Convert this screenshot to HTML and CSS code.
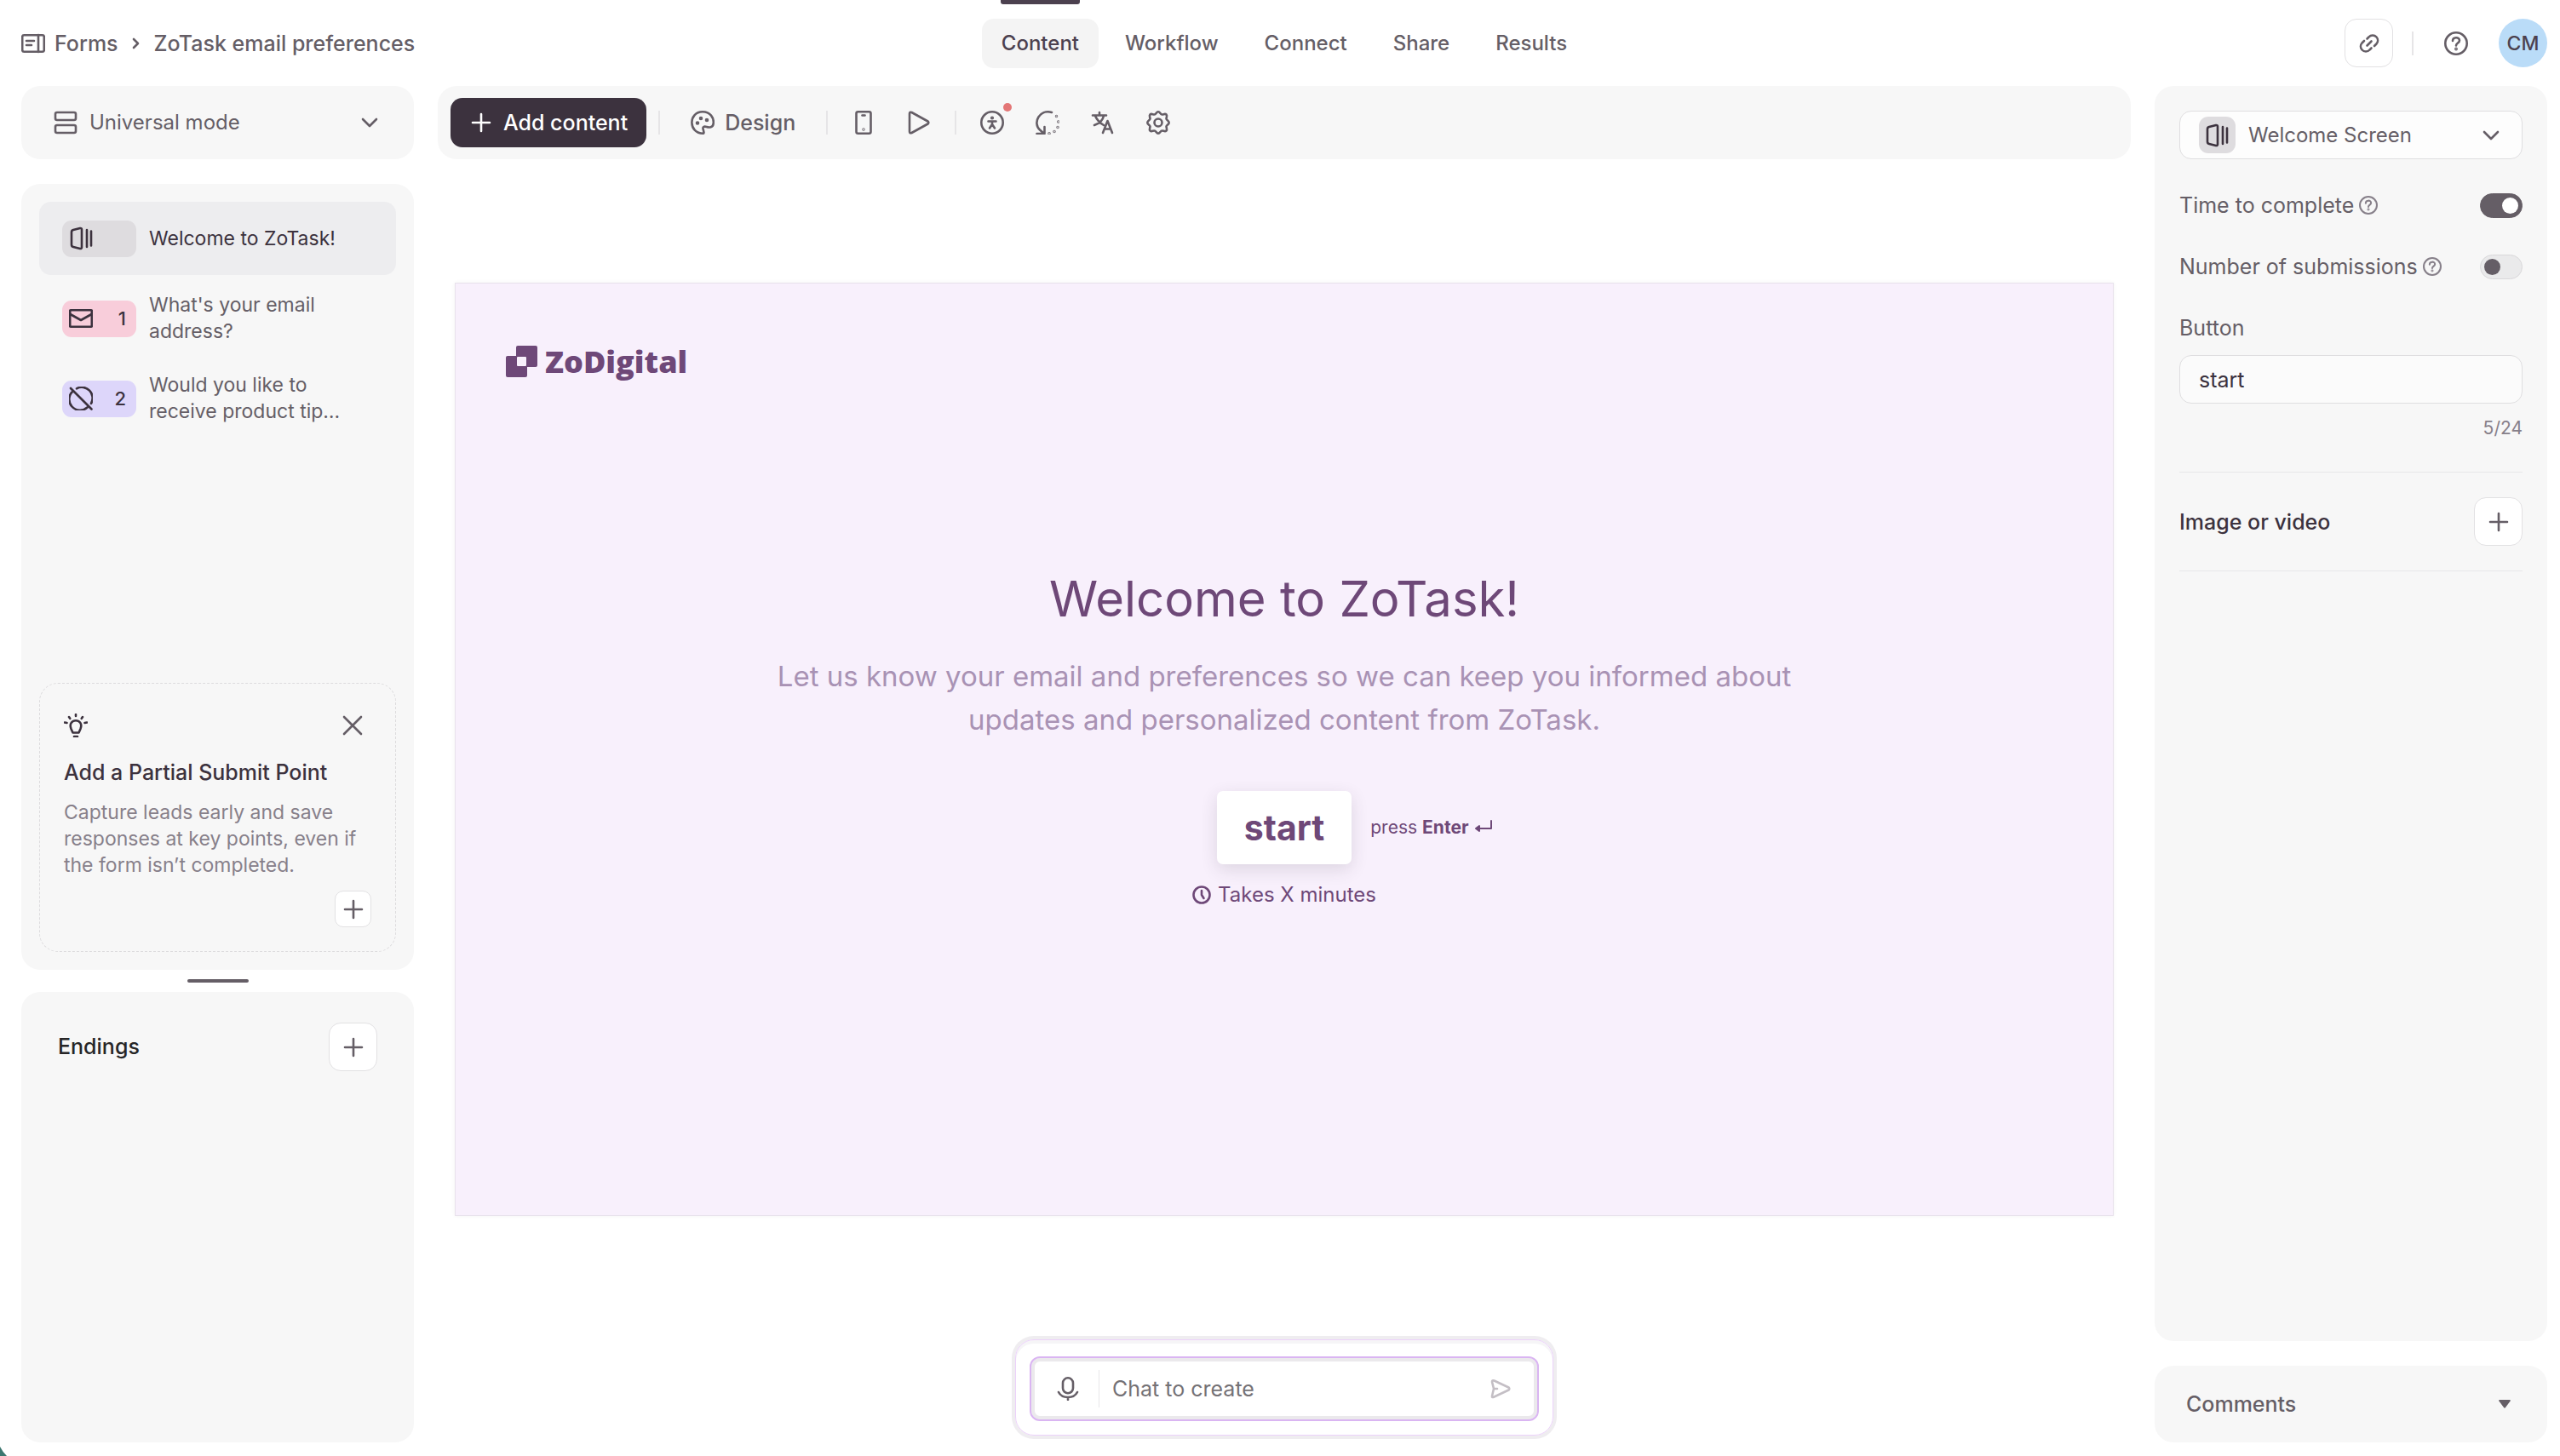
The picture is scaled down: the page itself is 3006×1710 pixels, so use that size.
FILE: index.html
```html
<!DOCTYPE html>
<html lang="en">
<head>
  <meta charset="UTF-8" />
  <meta name="viewport" content="width=device-width, initial-scale=1.0"/>
  <title>ZoTask email preferences</title>
  <link rel="stylesheet" href="styles.css">
</head>
<body>
  <header class="topbar">
    <nav class="breadcrumb" aria-label="Breadcrumb">
      <a href="#">
        <svg class="icon" viewBox="0 0 28 28"><rect x="1.200" y="4.200" width="25.600" height="19.600" rx="2"/><path d="M20 4v20M6 11h9M6 16h6"/></svg>
        Forms
      </a>
      <svg class="crumb-sep" viewBox="0 0 10 14"><path d="M2 2l5 5-5 5"/></svg>
      <a href="#">ZoTask email preferences</a>
    </nav>
    <nav class="tabs" aria-label="Form">
      <a class="tab active" href="#">Content</a>
      <a class="tab" href="#">Workflow</a>
      <a class="tab" href="#">Connect</a>
      <a class="tab" href="#">Share</a>
      <a class="tab" href="#">Results</a>
    </nav>
    <div class="account">
      <button class="square-btn" aria-label="Copy link">
        <svg class="icon" viewBox="0 0 28 28"><path d="M11.500 8.500l2-2a6 6 0 0 1 9 0 6 6 0 0 1 0 8l-2.500 2.500M8 11l-2.500 2.500a6 6 0 0 0 0 8 6 6 0 0 0 9 0l2-2M11.500 16.500l5-5"/></svg>
      </button>
      <span class="divider"></span>
      <button class="icon-btn" aria-label="Help">
        <svg class="icon" viewBox="0 0 28 28"><circle cx="14" cy="14" r="12.700"/><path d="M10 11c0-5 8-5 8-.5 0 3-4 3-4 6"/><circle class="fill" cx="14" cy="20.500" r=".6"/></svg>
      </button>
      <button class="avatar">CM</button>
    </div>
  </header>

  <main class="layout">
    <aside class="sidebar">
      <label class="panel mode">
        <svg class="icon" viewBox="0 0 28 28"><rect x="2" y="2" width="24" height="9" rx="2"/><rect x="2" y="17" width="24" height="9" rx="2"/></svg>
        <select aria-label="Mode">
          <option>Universal mode</option>
        </select>
        <svg class="chevron" viewBox="0 0 20 14"><path d="M2 3l8 8 8-8"/></svg>
      </label>

      <section class="panel steps">
        <div class="step-list">
          <button class="step selected">
            <span class="badge">
              <svg class="icon" viewBox="0 0 28 28"><path d="M5 4l8-2q2-.3 2 1.500v21q0 1.800-2 1.500l-8-2q-2-.5-2-2.500V6.500Q3 4.500 5 4zM21 4v20M26 5.500v17"/></svg>
            </span>
            <span class="step-text">Welcome to ZoTask!</span>
          </button>
          <button class="step">
            <span class="badge pink">
              <svg class="icon" viewBox="0 0 28 28"><rect x="1.200" y="4.200" width="25.600" height="19.600" rx="1"/><path d="M1.500 9L14 16l12.500-7"/></svg>
              1
            </span>
            <span class="step-text">What's your email address?</span>
          </button>
          <button class="step">
            <span class="badge purple">
              <svg class="icon" viewBox="0 0 28 28"><path d="M2 2l24.500 24.500M9 2.300a12.700 12.700 0 0 1 17 17.500M4.500 5.500a12.700 12.700 0 0 0 17 19"/></svg>
              2
            </span>
            <span class="step-text">Would you like to receive product tip…</span>
          </button>
        </div>

        <div class="tip">
          <div class="tip-head">
            <svg class="icon" viewBox="0 0 28 28"><path d="M10.500 22.500l-2-4.500c-5-13 16-13 11 0l-2 4.500zM12 27h4M14 1v2M6 4l1.200 1.800M22 4l-1.200 1.800M1 10.500l2.500.5M27 10.500l-2.500.5"/></svg>
            <button class="icon-btn" aria-label="Dismiss">
              <svg class="icon" viewBox="0 0 28 28"><path d="M4 4l20 20M24 4L4 24"/></svg>
            </button>
          </div>
          <h2>Add a Partial Submit Point</h2>
          <p>Capture leads early and save responses at key points, even if the form isn’t completed.</p>
          <button class="square-btn small" aria-label="Add partial submit point">
            <svg class="icon" viewBox="0 0 28 28"><path d="M14 4v20M4 14h20"/></svg>
          </button>
        </div>
      </section>

      <div class="handle"></div>

      <section class="panel endings">
        <h2>Endings</h2>
        <button class="square-btn" aria-label="Add ending">
          <svg class="icon" viewBox="0 0 28 28"><path d="M14 4v20M4 14h20"/></svg>
        </button>
      </section>
    </aside>

    <section class="editor">
      <div class="panel toolbar">
        <button class="add-btn">
          <svg class="icon" viewBox="0 0 28 28"><path d="M14 4v20M4 14h20"/></svg>
          Add content
        </button>
        <span class="divider"></span>
        <button class="design-btn">
          <svg class="icon" viewBox="0 0 28 28"><path d="M15 26.700C-3 27-3 1.300 14 1.300c9 0 13.500 7 12.700 13.700-.5 5-5 5-8 4-3-1-5 0-4 3 .5 2 1.300 4.500.3 4.700z"/><circle class="fill" cx="8" cy="14.500" r="1"/><circle class="fill" cx="12" cy="9" r="1"/><circle class="fill" cx="19" cy="11" r="1"/></svg>
          Design
        </button>
        <span class="divider"></span>
        <div class="tool-group">
          <button class="icon-btn" aria-label="Mobile preview">
            <svg class="icon" viewBox="0 0 28 28"><rect x="5.500" y="1.300" width="17" height="25.400" rx="2"/><path d="M12.500 5.500h3"/><circle class="fill" cx="14" cy="22" r=".4"/></svg>
          </button>
          <button class="icon-btn" aria-label="Play preview">
            <svg class="icon" viewBox="0 0 28 28"><path d="M3 3.500q0-2.500 2.500-1.500l19 10.500q1.500 1.500 0 3l-19 10.500Q3 27 3 24.500z"/></svg>
          </button>
        </div>
        <span class="divider"></span>
        <div class="tool-group">
          <button class="icon-btn" aria-label="Accessibility">
            <svg class="icon" viewBox="0 0 28 28"><circle cx="14" cy="14" r="12.700"/><circle class="fill" cx="14" cy="8.500" r=".8"/><path d="M9.500 12.500h9M14 12.500v4M14 16l-3 4.500M14 16l3 4.500"/></svg>
            <span class="dot"></span>
          </button>
          <button class="icon-btn" aria-label="Branching">
            <svg class="icon" viewBox="0 0 28 28"><path d="M19 2C5-2-4 14 5 22.500l4.500 4M10.500 19v8H1.500"/><circle class="fill" cx="24.500" cy="6.500" r=".4"/><circle class="fill" cx="26.700" cy="13" r=".4"/><circle class="fill" cx="26" cy="19.500" r=".4"/><circle class="fill" cx="22" cy="24.500" r=".4"/><circle class="fill" cx="16" cy="26.700" r=".4"/></svg>
          </button>
          <button class="icon-btn" aria-label="Translate">
            <svg class="icon" viewBox="0 0 28 28"><path d="M2 5.500h16M10 2v3.500M5 6c2 5 5 8 10 11M15 6c-1 5-5 9-11 11M14 26l5.500-14L25 26M16 21.500h7"/></svg>
          </button>
          <button class="icon-btn" aria-label="Settings">
            <svg class="icon" viewBox="0 0 28 28"><path d="M14 1.300c2.300 0 2.500 3.200 4.500 3.200S22 3 23.500 4.500 23.500 8 23.500 9.500s3.200 2.200 3.200 4.500-3.200 3-3.200 4.500 1.500 3.500 0 5-3 0-5 0-2.200 3.200-4.500 3.200-2.500-3.200-4.500-3.200-3.500 1.500-5 0 0-3.500 0-5-3.200-2.200-3.200-4.500 3.200-3 3.200-4.500-1.500-3.500 0-5 3 0 5 0 2.200-3.200 4.500-3.200z"/><circle cx="14" cy="14" r="4.500"/></svg>
          </button>
        </div>
      </div>

      <div class="stage">
        <article class="canvas">
          <div class="brand">
            <svg class="brand-mark" viewBox="0 0 37 37"><rect x="12" y="0" width="25" height="25" rx="2"/><rect x="0" y="12" width="25" height="25" rx="2"/><rect class="hole" x="13" y="13" width="11" height="11" rx="1"/></svg>
            <span>ZoDigital</span>
          </div>
          <div class="welcome">
            <h1>Welcome to ZoTask!</h1>
            <p>Let us know your email and preferences so we can keep you informed about updates and personalized content from ZoTask.</p>
            <div class="start-row">
              <button class="start-btn">start</button>
              <span class="hint">press <strong>Enter</strong>
                <svg class="enter" viewBox="0 0 20 18"><path d="M19 1v9H4"/><path class="fill" d="M5 7v6l-4-3z"/></svg>
              </span>
            </div>
            <div class="duration">
              <svg class="clock" viewBox="0 0 22 22"><circle cx="11" cy="11" r="9.500"/><path d="M11 6v5l2.500 4"/></svg>
              Takes X minutes
            </div>
          </div>
        </article>
      </div>

      <form class="chat">
        <div class="chat-box">
          <button class="icon-btn" type="button" aria-label="Dictate">
            <svg class="icon" viewBox="0 0 28 28"><rect x="8" y="1.300" width="12" height="18" rx="6"/><path d="M3 18c4 8 18 8 22 0M14 24v3"/></svg>
          </button>
          <input type="text" placeholder="Chat to create" aria-label="Chat to create">
          <button class="icon-btn send" type="button" aria-label="Send">
            <svg class="icon" viewBox="0 0 28 28"><path d="M4 6q0-2.500 2.500-1.500l17 8q1.500 1.500 0 3l-17 8Q3.500 25 4 22.500L6 14zM6 14h4"/></svg>
          </button>
        </div>
      </form>
    </section>

    <aside class="sidebar">
      <section class="panel settings">
        <label class="field type-select">
          <span class="badge square">
            <svg class="icon" viewBox="0 0 28 28"><path d="M5 4l8-2q2-.3 2 1.500v21q0 1.800-2 1.500l-8-2q-2-.5-2-2.500V6.500Q3 4.500 5 4zM21 4v20M26 5.500v17"/></svg>
          </span>
          <select aria-label="Screen type">
            <option>Welcome Screen</option>
          </select>
          <svg class="chevron" viewBox="0 0 20 14"><path d="M2 3l8 8 8-8"/></svg>
        </label>

        <div class="setting">
          <label for="time">Time to complete</label>
          <svg class="help" viewBox="0 0 28 28"><circle cx="14" cy="14" r="12.700"/><path d="M10 11c0-5 8-5 8-.5 0 3-4 3-4 6"/><circle class="fill" cx="14" cy="20.500" r=".6"/></svg>
          <input class="toggle" type="checkbox" id="time" checked>
        </div>
        <div class="setting">
          <label for="submissions">Number of submissions</label>
          <svg class="help" viewBox="0 0 28 28"><circle cx="14" cy="14" r="12.700"/><path d="M10 11c0-5 8-5 8-.5 0 3-4 3-4 6"/><circle class="fill" cx="14" cy="20.500" r=".6"/></svg>
          <input class="toggle" type="checkbox" id="submissions">
        </div>

        <label class="field-label" for="button-text">Button</label>
        <input class="field" type="text" id="button-text" value="start" maxlength="24">
        <div class="counter">5/24</div>

        <div class="media">
          <h2>Image or video</h2>
          <button class="square-btn" aria-label="Add image or video">
            <svg class="icon" viewBox="0 0 28 28"><path d="M14 4v20M4 14h20"/></svg>
          </button>
        </div>
      </section>

      <button class="panel comments">
        Comments
        <svg class="caret" viewBox="0 0 14 10"><path d="M1 0h12q1 0 .8 1.300L8 9q-1 1.500-2 0L.2 1.300Q0 0 1 0z"/></svg>
      </button>
    </aside>
  </main>

  <svg class="corner" viewBox="0 0 8 11"><path d="M0 0q3 6 8 11H0z"/></svg>
</body>
</html>
```

FILE: styles.css
```css
* { box-sizing: border-box; }
body {
  font-family: Inter, "Liberation Sans", sans-serif;
  font-size: 25px;
  line-height: 32px;
  color: #655e66;
  background: #fff;
  margin: 0;
  min-height: 100vh;
  display: flex;
  flex-direction: column;
}
h1, h2, p { margin: 0; }
a { color: inherit; text-decoration: none; }
button, input, select {
  font: inherit;
  color: inherit;
  background: none;
  border: 0;
  margin: 0;
  padding: 0;
}
button { cursor: pointer; }
select {
  appearance: none;
  flex: 1;
  min-width: 0;
  font-size: 24px;
}
h2 {
  font-size: 25px;
  font-weight: 500;
  color: #3c323e;
}
svg {
  display: block;
  flex: none;
  fill: none;
  stroke: currentColor;
  stroke-width: 2.6;
  stroke-linecap: round;
  stroke-linejoin: round;
}
svg .fill { fill: currentColor; }
.icon { width: 28px; height: 28px; }
.chevron { width: 20px; height: 14px; pointer-events: none; }
.panel {
  background: #f7f7f7;
  border-radius: 22px;
}
.divider {
  width: 2px;
  height: 28px;
  background: #e6e5e7;
}
.icon-btn { position: relative; }
.square-btn {
  width: 57px;
  height: 57px;
  display: flex;
  align-items: center;
  justify-content: center;
  flex: none;
  background: #fff;
  border: 1px solid #e2e1e3;
  border-radius: 14px;
}
.square-btn.small {
  width: 43px;
  height: 43px;
  border-radius: 10px;
}

/* top bar */
.topbar {
  display: grid;
  grid-template-columns: 1fr auto 1fr;
  align-items: center;
  padding: 0 15px 0 25px;
  height: 101px;
  font-weight: 500;
}
.breadcrumb, .breadcrumb a { display: flex; align-items: center; }
.breadcrumb { gap: 16px; }
.breadcrumb a { gap: 11px; }
.crumb-sep { width: 10px; height: 14px; }
.tabs { display: flex; gap: 8px; font-size: 24px; }
.tab {
  padding: 13px 23px;
  border-radius: 14px;
}
.tab.active {
  position: relative;
  color: #4c414f;
  background: #f4f4f4;
}
.tab.active::before {
  content: "";
  position: absolute;
  top: -22px;
  left: 22px;
  right: 22px;
  height: 5px;
  border-radius: 0 0 3px 3px;
  background: #4c414f;
}
.account {
  display: flex;
  align-items: center;
  justify-content: flex-end;
}
.account .divider { margin: 0 36px 0 22px; }
.avatar {
  width: 57px;
  height: 57px;
  margin-left: 36px;
  border-radius: 50%;
  font-size: 23px;
  font-weight: 500;
  color: #4c414f;
  background: #badcf8;
}

/* three columns */
.layout {
  flex: 1;
  display: grid;
  grid-template-columns: 461px 1fr 461px;
  gap: 28px;
  padding: 0 15px 16px 25px;
}
.sidebar, .editor {
  display: flex;
  flex-direction: column;
  min-width: 0;
}

/* left sidebar */
.mode {
  display: flex;
  align-items: center;
  gap: 14px;
  height: 86px;
  padding: 0 42px 0 38px;
  margin-bottom: 29px;
}
.steps {
  flex: 27 1 0;
  display: flex;
  flex-direction: column;
  justify-content: space-between;
  padding: 21px;
}
.step-list { display: flex; flex-direction: column; gap: 8px; }
.step {
  display: flex;
  align-items: center;
  gap: 15px;
  min-height: 86px;
  padding: 0 27px;
  border-radius: 14px;
  text-align: left;
  font-size: 23px;
  line-height: 31px;
}
.step.selected { color: #3c323e; background: #ededef; }
.step-text { max-width: 240px; }
.badge {
  display: flex;
  align-items: center;
  justify-content: space-between;
  flex: none;
  width: 87px;
  height: 43px;
  padding: 0 12px 0 8px;
  border-radius: 11px;
  color: #3c323e;
  background: #dedcdf;
  font-size: 22px;
  font-weight: 500;
}
.badge.pink { background: #f8cdda; }
.badge.purple { background: #ddd6fa; }
.badge.square { width: 43px; padding: 0 7px; }
.tip {
  display: flex;
  flex-direction: column;
  border: 1px dashed #dddcde;
  border-radius: 22px;
  padding: 35px 28px 28px;
}
.tip-head {
  display: flex;
  justify-content: space-between;
  padding-right: 8px;
  margin-bottom: 25px;
  color: #3c323e;
}
.tip-head .icon-btn { color: #655e66; }
.tip p {
  margin: 16px 0 14px;
  font-size: 23px;
  line-height: 31px;
  color: #87808a;
}
.tip .square-btn { align-self: flex-end; }
.handle {
  width: 72px;
  height: 4px;
  margin: 11px auto;
  border-radius: 2px;
  background: #655e66;
}
.endings {
  flex: 14 1 0;
  display: flex;
  justify-content: space-between;
  align-items: flex-start;
  padding: 36px 43px;
}
.endings h2 { line-height: 57px; color: #262627; }

/* editor */
.toolbar {
  display: flex;
  align-items: center;
  height: 86px;
  padding: 0 15px;
  font-weight: 500;
}
.toolbar .divider { margin-right: 28px; }
.add-btn, .design-btn {
  display: flex;
  align-items: center;
  gap: 12px;
}
.add-btn {
  height: 58px;
  padding: 0 22px;
  margin-right: 14px;
  border-radius: 14px;
  color: #fff;
  background: #3c323e;
}
.design-btn { margin: 0 36px 0 8px; }
.tool-group { display: flex; gap: 37px; margin-right: 28px; }
.dot {
  position: absolute;
  top: -9px;
  right: -9px;
  width: 10px;
  height: 10px;
  border-radius: 50%;
  background: #e37676;
}
.stage {
  flex: 1;
  display: flex;
  align-items: center;
  padding: 0 20px;
}
.canvas {
  flex: 1;
  display: flex;
  flex-direction: column;
  aspect-ratio: 16 / 9;
  padding: 73px 59px 140px;
  border: 1px solid #e8e2ec;
  box-shadow: 0 0 5px rgba(0,0,0,0.05);
  color: #6e4878;
  background: #f8f0fc;
}
.brand {
  display: flex;
  align-items: center;
  gap: 9px;
  font-family: "Open Sans", sans-serif;
  font-size: 36px;
  font-weight: 800;
  line-height: 37px;
}
.brand-mark { width: 37px; height: 37px; fill: #6e4878; stroke: none; }
.brand-mark .hole { fill: #f8f0fc; }
.welcome {
  flex: 1;
  display: flex;
  flex-direction: column;
  align-items: center;
  justify-content: center;
  text-align: center;
}
h1 {
  font-size: 58px;
  font-weight: 400;
  line-height: 80px;
}
.welcome p {
  max-width: 1240px;
  margin: 26px 0 58px;
  font-size: 33px;
  line-height: 51px;
  color: #a992b4;
}
.start-row {
  display: grid;
  grid-template-columns: 1fr auto 1fr;
  align-items: center;
  width: 100%;
}
.start-btn {
  grid-column: 2;
  height: 86px;
  padding: 0 32px;
  border-radius: 7px;
  font-size: 41px;
  font-weight: 700;
  background: #fff;
  box-shadow: 0 6px 20px rgba(60,50,62,0.14);
}
.hint {
  display: flex;
  align-items: center;
  gap: 6px;
  margin-left: 22px;
  font-size: 21px;
}
.enter { width: 20px; height: 18px; margin-left: 2px; stroke-width: 2; }
.duration {
  display: flex;
  align-items: center;
  gap: 8px;
  margin-top: 20px;
  font-size: 24px;
}
.clock { width: 22px; height: 22px; }

/* chat box */
.chat {
  align-self: center;
  width: 632px;
  margin-bottom: 8px;
  padding: 19px 16px 16px;
  border: 1px solid #ecd2fa;
  border-radius: 22px;
  box-shadow: 0 0 0 4px #efedf0, inset 0 4px 0 #f6f5f7;
}
.chat-box {
  display: flex;
  align-items: center;
  height: 76px;
  padding: 0 29px;
  border: 2px solid #dab5f2;
  border-radius: 12px;
  box-shadow: inset 0 0 0 4px #ebe9ec;
}
.chat-box input {
  flex: 1;
  min-width: 0;
  height: 44px;
  margin-left: 22px;
  padding-left: 15px;
  border-left: 1px solid #e8e7e9;
}
.chat-box input::placeholder { color: #757276; opacity: 1; }
.send { color: #c4bfc5; }

/* right sidebar */
.settings {
  flex: 1;
  display: flex;
  flex-direction: column;
  padding: 29px;
  margin-bottom: 29px;
}
.field {
  height: 57px;
  padding: 0 22px;
  border: 1px solid #dfdee0;
  border-radius: 14px;
  color: #3c323e;
  background: #fbfbfb;
}
.type-select {
  display: flex;
  align-items: center;
  gap: 15px;
  margin-bottom: 18px;
  padding-right: 26px;
  color: #655e66;
  background: #fdfdfd;
}
.setting {
  display: flex;
  align-items: center;
  gap: 6px;
  height: 72px;
}
.help { width: 22px; height: 22px; color: #87808a; }
.toggle {
  appearance: none;
  width: 50px;
  height: 29px;
  margin-left: auto;
  padding: 4px;
  border: 1px solid #d9d8da;
  border-radius: 15px;
  background: #eaeaeb;
}
.toggle::before {
  content: "";
  display: block;
  width: 19px;
  height: 19px;
  border-radius: 50%;
  background: #655e66;
}
.toggle:checked { border-color: #655e66; background: #655e66; }
.toggle:checked::before { margin-left: auto; background: #fff; }
.field-label { margin: 20px 0 16px; }
.counter {
  margin: 13px 0 35px;
  text-align: right;
  font-size: 21px;
  color: #87808a;
}
.media {
  display: flex;
  align-items: center;
  justify-content: space-between;
  padding: 29px 0;
  border-top: 1px solid #e8e7e9;
  border-bottom: 1px solid #e8e7e9;
}
.comments {
  display: flex;
  align-items: center;
  justify-content: space-between;
  height: 90px;
  padding: 0 43px 0 37px;
  font-weight: 500;
}
.caret { width: 14px; height: 10px; fill: currentColor; stroke: none; }

/* rounded window edge */
.corner {
  position: absolute;
  left: 0;
  bottom: 0;
  width: 8px;
  height: 11px;
  fill: #3c766f;
  stroke: none;
}
```
